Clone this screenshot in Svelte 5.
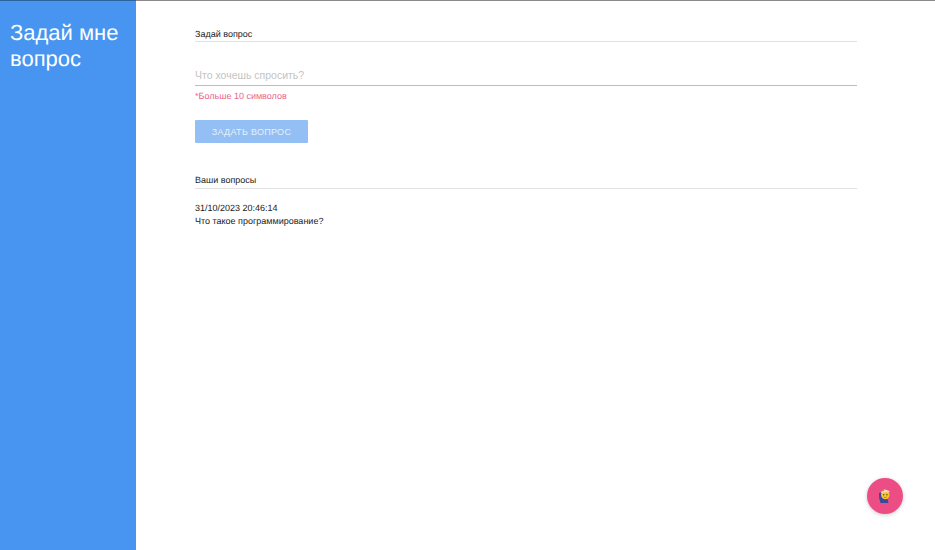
<script lang="ts">
	let question = '';
	const questions = [{ date: '31/10/2023 20:46:14', text: 'Что такое программирование?' }];
</script>

<div class="topline"></div>
<div class="layout">
	<aside class="sidebar">
		<h1>Задай мне вопрос</h1>
	</aside>
	<main class="content">
		<h2 class="heading">Задай вопрос</h2>
		<input class="field" type="text" placeholder="Что хочешь спросить?" bind:value={question} />
		<p class="hint">*Больше 10 символов</p>
		<button class="submit" disabled>Задать вопрос</button>

		<h2 class="heading second">Ваши вопросы</h2>
		<ul class="list">
			{#each questions as q}
				<li>
					<div>{q.date}</div>
					<div>{q.text}</div>
				</li>
			{/each}
		</ul>
	</main>
</div>
<button class="fab" aria-label="Помощь">
	<svg width="14" height="16" viewBox="0 0 14 16">
		<path d="M1 5 L4.5 4 L9.5 11 L10.5 15 L2.5 15 Q0.5 10 1 5Z" fill="#3a4a9a" />
		<circle cx="7.3" cy="7" r="4.2" fill="#f7c531" />
		<path d="M3 4.2 L5.5 1 L11.5 3 L11.1 4.6 Q7 3 4.1 5.4Z" fill="#f3e2c0" />
		<path d="M3.9 3 L5.5 1 L6.7 1.4 L5.1 3.6Z" fill="#e2574c" />
		<circle cx="5.7" cy="6.8" r="0.7" fill="#5a3a1a" />
		<circle cx="8.9" cy="6.8" r="0.7" fill="#5a3a1a" />
		<path d="M5.9 9 Q7.3 10.2 8.7 9" stroke="#b5542a" stroke-width="0.7" fill="none" />
	</svg>
</button>

<style>
	:global(body) {
		font-family: 'Liberation Sans', Arial, sans-serif;
		background: #fff;
		text-rendering: geometricPrecision;
	}

	.topline {
		height: 1px;
		background: linear-gradient(90deg, #2f639f 136px, #8a8a8a 136px);
	}

	.layout {
		display: flex;
		height: 549px;
		overflow: hidden;
	}

	.sidebar {
		flex: 0 0 136px;
		box-sizing: border-box;
		padding: 19px 10px 0;
		background: #4795f0;
		color: #fff;
	}

	h1 {
		margin: 0;
		font-size: 22px;
		font-weight: 400;
		line-height: 26px;
	}

	.content {
		flex: 1;
		padding: 28px 78px 0 59px;
		color: #222;
		font-size: 9px;
	}

	.heading {
		margin: 0;
		padding-bottom: 1px;
		border-bottom: 1px solid #e2e2e2;
		font-size: 9px;
		font-weight: 400;
		line-height: 11px;
	}

	.second {
		margin-top: 32px;
		padding-bottom: 2px;
	}

	.field {
		display: block;
		box-sizing: border-box;
		width: 100%;
		height: 30px;
		margin-top: 14px;
		padding: 8px 0 0;
		border: 0;
		border-bottom: 1px solid #bdbdbd;
		outline: none;
		font: inherit;
		font-size: 10.5px;
	}

	.field::placeholder {
		color: #c4c4c4;
		opacity: 1;
	}

	.hint {
		margin: 5px 0 0;
		color: #ec5f8b;
		font-size: 9px;
		line-height: 11px;
	}

	.submit {
		display: block;
		width: 113px;
		height: 23px;
		margin-top: 18px;
		padding: 0;
		border: 0;
		border-radius: 1px;
		background: #93bff5;
		color: #e6f0fc;
		font: inherit;
		font-size: 9px;
		letter-spacing: 0.3px;
		text-transform: uppercase;
	}

	.list {
		margin: 13px 0 0;
		padding: 0;
		list-style: none;
		font-size: 9px;
		line-height: 12.5px;
	}

	.fab {
		position: fixed;
		left: 867px;
		top: 478px;
		display: flex;
		align-items: center;
		justify-content: center;
		width: 36px;
		height: 36px;
		padding: 0;
		border: 0;
		border-radius: 50%;
		background: #ec4d84;
		box-shadow: 0 1px 4px rgba(0, 0, 0, 0.2);
	}
</style>
